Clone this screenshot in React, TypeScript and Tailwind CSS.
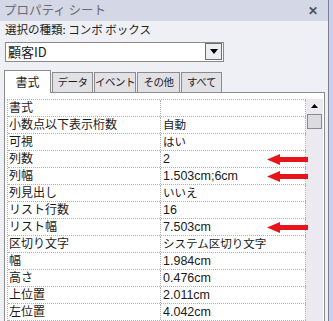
import React from "react";

const rows: [string, string, boolean?][] = [
  ["書式", ""],
  ["小数点以下表示桁数", "自動"],
  ["可視", "はい"],
  ["列数", "2", true],
  ["列幅", "1.503cm;6cm", true],
  ["列見出し", "いいえ"],
  ["リスト行数", "16"],
  ["リスト幅", "7.503cm", true],
  ["区切り文字", "システム区切り文字"],
  ["幅", "1.984cm"],
  ["高さ", "0.476cm"],
  ["上位置", "2.011cm"],
  ["左位置", "4.042cm"],
];

const tabs: [string, string][] = [
  ["データ", "w-[41px]"],
  ["イベント", "w-[42px]"],
  ["その他", "w-[43px]"],
  ["すべて", "w-[41px]"],
];

const latin = /^[\x00-\x7f]*$/;

function RedArrow() {
  return (
    <svg className="top-[3px] right-[-3px] absolute" width="41" height="11" viewBox="0 0 41 11">
      <polygon points="0,5.5 13,0 13,3 41,3 41,8 13,8 13,11" fill="#e8141c" />
    </svg>
  );
}

export default function App() {
  return (
    <div
      className="flex bg-[#eef0f6] w-[333px] h-[321px] overflow-hidden text-[#1a1a1a]"
      style={{ fontFamily: '"Noto Sans CJK JP", "Liberation Sans", sans-serif' }}
    >
      <div className="flex flex-col w-[328px]">
        {/* title */}
        <div className="flex justify-between items-center bg-[#d4d8e6] pr-[10px] pl-[4px] h-[22px]">
          <span className="text-[#6a6a72] text-[12.5px] leading-none">プロパティ シート</span>
          <span className="font-bold text-[#505058] text-[12px] leading-none">✕</span>
        </div>

        <div className="flex items-center pl-[5px] h-[19px] text-[#222] text-[11.5px]">
          選択の種類: コンボ ボックス
        </div>

        {/* combo */}
        <div className="flex items-center bg-white mt-[3px] ml-[5px] border border-[#8a8a8a] w-[219px] h-[21px]">
          <span className="flex-1 pl-[2px] text-[13px] leading-none">顧客ID</span>
          <div className="flex justify-center items-center bg-[#eceef2] mr-[1px] border border-[#6e6e6e] w-[17px] h-[17px]">
            <svg width="8" height="5" viewBox="0 0 8 5">
              <polygon points="0,0 8,0 4,5" fill="#000" />
            </svg>
          </div>
        </div>

        {/* tabs */}
        <div className="flex items-end mt-[8px] ml-[4px] h-[22px]">
          <div className="z-10 flex justify-center items-center bg-white -mb-px border border-[#8c8c8c] border-b-0 w-[47px] h-[23px] text-[12px]">
            書式
          </div>
          {tabs.map(([t, w]) => (
            <div
              key={t}
              className={`flex justify-center items-center bg-[#e2e2e6] ml-[1px] border border-[#8c8c8c] border-b-0 h-[20px] text-[10.5px] leading-none tracking-[-0.5px] whitespace-nowrap ${w}`}
            >
              {t}
            </div>
          ))}
        </div>

        {/* panel */}
        <div
          className="flex flex-1 bg-white ml-[4px] pt-[6px] pl-[2px] border border-[#8c8c8c] border-b-0 w-[321px]"
          style={{ fontFamily: '"Liberation Sans", "Noto Sans CJK JP", sans-serif' }}
        >
          <div className="border-[#b0b0b0] border-t border-l border-dotted w-[299px]">
            {rows.map(([k, v, arrow]) => (
              <div key={k} className="flex border-[#b0b0b0] border-b border-dotted h-[17px]">
                <div className="flex items-center pl-[1px] border-[#b0b0b0] border-r border-dotted w-[153px] overflow-hidden text-[12px] leading-[16px]">
                  {k}
                </div>
                <div className="relative flex flex-1 items-center pl-[2px] border-[#b0b0b0] border-r border-dotted leading-[16px]">
                  <span className={latin.test(v) ? "text-[12.5px]" : "text-[11.5px]"}>{v}</span>
                  {arrow && <RedArrow />}
                </div>
              </div>
            ))}
          </div>
          <div className="flex flex-col items-center bg-[#eceaf0] w-[17px]">
            <svg className="mt-[5px]" width="7" height="4" viewBox="0 0 7 4">
              <polygon points="0,4 7,4 3.5,0" fill="#000" />
            </svg>
            <div className="bg-[#dcdce0] mt-[6px] border border-[#8a8a90] w-[15px] h-[15px]" />
          </div>
        </div>
      </div>
      <div className="bg-[#7e7e8c] w-[1px]" />
      <div className="bg-[#c4d2f0] w-[4px]" />
    </div>
  );
}
